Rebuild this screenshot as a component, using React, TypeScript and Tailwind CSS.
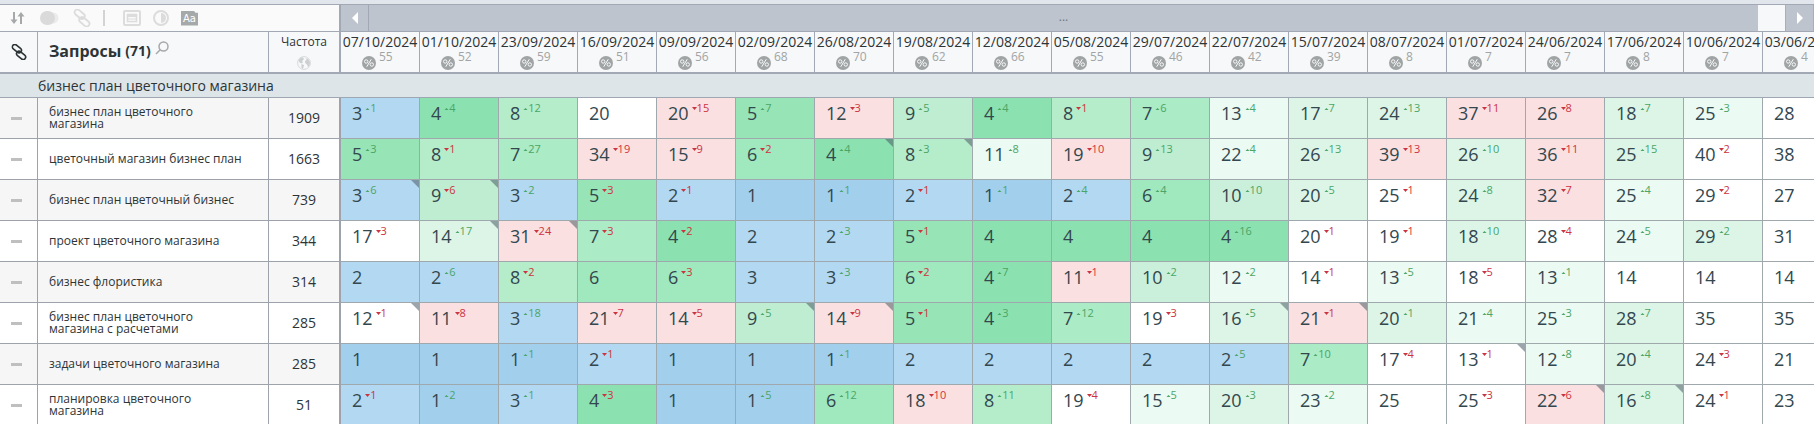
type Tone = 'w' | 'r' | 'b1' | 'b2' | 'g4' | 'g5' | 'g6' | 'g7' | 'g8' | 'g9' | 'g10' | 'p' | 'pp';

const TONES: Record<Tone, string> = {
  w: 'bg-white',
  r: 'bg-[#fae0e0]',
  b1: 'bg-[#a1cfec]',
  b2: 'bg-[#b3d8f1]',
  g4: 'bg-[#8be2b0]',
  g5: 'bg-[#97e4b6]',
  g6: 'bg-[#a0e8bd]',
  g7: 'bg-[#abebc5]',
  g8: 'bg-[#b5edcb]',
  g9: 'bg-[#beedd2]',
  g10: 'bg-[#caf0db]',
  p: 'bg-[#dcf5e7]',
  pp: 'bg-[#ebfaf2]',
};

const DATES: [string, number][] = [
  ['07/10/2024', 55],
  ['01/10/2024', 52],
  ['23/09/2024', 59],
  ['16/09/2024', 51],
  ['09/09/2024', 56],
  ['02/09/2024', 68],
  ['26/08/2024', 70],
  ['19/08/2024', 62],
  ['12/08/2024', 66],
  ['05/08/2024', 55],
  ['29/07/2024', 46],
  ['22/07/2024', 42],
  ['15/07/2024', 39],
  ['08/07/2024', 8],
  ['01/07/2024', 7],
  ['24/06/2024', 7],
  ['17/06/2024', 8],
  ['10/06/2024', 7],
  ['03/06/2024', 4],
];

// cell format: position, +gain or -loss, * marks a changed landing page, then the tone
const ROWS: { query: string; freq: number; cells: string }[] = [
  {
    query: 'бизнес план цветочного магазина',
    freq: 1909,
    cells:
      '3+1:b2 4+4:g4 8+12:g8 20:w 20-15:r 5+7:g5 12-3:r 9+5:g9 4+4:g4 8-1:g8 7+6:g7 13+4:pp 17+7:p 24+13:p 37-11:r 26-8:r 18+7:p 25+3:pp 28:w',
  },
  {
    query: 'цветочный магазин бизнес план',
    freq: 1663,
    cells:
      '5+3:g5 8-1:g8 7+27:g7 34-19:r 15-9:r 6-2:g6 4+4*:g4 8+3*:g8 11+8:pp 19-10:r 9+13:g9 22+4:pp 26+13:p 39-13:r 26+10:p 36-11:r 25+15:p 40-2:w 38:w',
  },
  {
    query: 'бизнес план цветочный бизнес',
    freq: 739,
    cells:
      '3+6*:b2 9-6*:g9 3+2:b2 5-3:g5 2-1:b2 1:b1 1+1:b1 2-1:b2 1+1:b1 2+4:b2 6+4:g6 10+10:g10 20+5:p 25-1:w 24+8:p 32-7:r 25+4:pp 29-2:w 27:w',
  },
  {
    query: 'проект цветочного магазина',
    freq: 344,
    cells:
      '17-3:w 14+17*:p 31-24*:r 7-3:g7 4-2:g4 2:b2 2+3:b2 5-1:g5 4:g4 4:g4 4:g4 4+16:g4 20-1:w 19-1:w 18+10:p 28-4:w 24+5:pp 29+2:p 31:w',
  },
  {
    query: 'бизнес флористика',
    freq: 314,
    cells:
      '2:b2 2+6:b2 8-2:g8 6:g6 6-3:g6 3:b2 3+3:b2 6-2:g6 4+7:g4 11-1:r 10+2:g10 12+2:pp 14-1:w 13+5:pp 18-5:w 13+1:pp 14:w 14:w 14:w',
  },
  {
    query: 'бизнес план цветочного магазина с расчетами',
    freq: 285,
    cells:
      '12-1*:w 11-8:r 3+18:b2 21-7:r 14-5:r 9+5*:g9 14-9*:r 5-1:g5 4+3:g4 7+12:g7 19-3:w 16+5*:p 21-1*:r 20+1:p 21+4:pp 25+3:pp 28+7:p 35:w 35:w',
  },
  {
    query: 'задачи цветочного магазина',
    freq: 285,
    cells:
      '1:b1 1:b1 1+1:b1 2-1:b2 1:b1 1:b1 1+1:b1 2:b2 2:b2 2:b2 2:b2 2+5:b2 7+10:g7 17-4:w 13-1*:w 12+8:pp 20+4:p 24-3:w 21:w',
  },
  {
    query: 'планировка цветочного магазина',
    freq: 51,
    cells:
      '2-1:b2 1+2:b1 3+1:b2 4-3:g4 1:b1 1+5:b1 6+12:g6 18-10:r 8+11:g8 19-4:w 15+5:pp 20+3:p 23+2:pp 25:w 25-3:w 22-6*:r 16+8*:p 24-1:w 23:w',
  },
];

function parseCell(raw: string) {
  const m = raw.match(/^(\d+)([+-])?(\d+)?(\*)?:(\w+)$/)!;
  return { pos: m[1], sign: m[2], diff: m[3], marked: Boolean(m[4]), tone: m[5] as Tone };
}

function ChainIcon({ className }: { className: string }) {
  return (
    <svg viewBox="0 0 18 18" className={className} fill="none" stroke="currentColor" strokeWidth="1.800" aria-hidden>
      <g transform="rotate(40 9 9)">
        <rect x="-1" y="4.800" width="11.500" height="5.600" rx="2.800" />
        <rect x="7.500" y="7.600" width="11.500" height="5.600" rx="2.800" />
      </g>
    </svg>
  );
}

function PercentIcon() {
  return (
    <svg viewBox="0 0 14 14" className="h-3.5 w-3.5" aria-hidden>
      <circle cx="7" cy="7" r="7" fill="#a0a4a5" />
      <g fill="none" stroke="#f7f8f9" strokeWidth="1">
        <circle cx="4.200" cy="5.500" r="1.700" />
        <circle cx="9.800" cy="8.500" r="1.700" />
        <path d="M9.300 3.200 4.700 10.800" />
      </g>
    </svg>
  );
}

function GlobeIcon() {
  return (
    <svg viewBox="0 0 14 14" className="h-3.5 w-3.5" aria-hidden>
      <circle cx="7" cy="7" r="6.400" fill="none" stroke="#d6d8da" strokeWidth="1" />
      <path d="M1.500 4 4 1.500l2.500.3.300 1.700L5 5l1 1.200L4.500 7.500 2.500 6.500zM4.500 8l2.500 1-.5 2.500L5.500 13l-1.200-2zM8.500 2.500l2.500.3L13 6l-.5 3.500L11 11l-1-2.500L8.200 7 8 5l1.500-1z" fill="#cdd0d2" />
    </svg>
  );
}

function Toolbar() {
  return (
    <div className="flex w-[341px] shrink-0 items-center border-r-2 border-[#a2a9b5] bg-[#fafafa] pl-2.5 text-[#dcdcdc]">
      <button type="button" aria-label="Сортировка" className="mr-[15px] text-[#a6a9a9]">
        <svg viewBox="0 0 15 14" className="h-3.5 w-[15px]" fill="none" stroke="currentColor" strokeWidth="2" aria-hidden>
          <path d="M4 1v9M11 13V4" />
          <path d="M.5 8.500h7L4 13zM7.500 5.500h7L11 1z" fill="currentColor" stroke="none" />
        </svg>
      </button>
      <button type="button" aria-label="Группы" className="mr-3.5">
        <svg viewBox="0 0 19 14" className="h-3.5 w-[19px]" aria-hidden>
          <circle cx="13" cy="7" r="5.500" fill="#ebebeb" />
          <rect x="0" y="0" width="15" height="14" rx="7" fill="#dadada" />
        </svg>
      </button>
      <button type="button" aria-label="Ссылки">
        <ChainIcon className="h-[18px] w-[18px]" />
      </button>
      <span className="ml-3 mr-[18px] h-4 w-0.5 bg-[#d3d3d3]" />
      <button type="button" aria-label="Таблица" className="mr-3">
        <svg viewBox="0 0 18 16" className="h-4 w-[18px]" fill="none" stroke="currentColor" strokeWidth="2" aria-hidden>
          <rect x="1" y="1" width="16" height="14" rx="1" />
          <rect x="4.500" y="4.500" width="9" height="7" strokeWidth="1.500" />
          <path d="M4 5.500h10" strokeWidth="3" />
          <path d="M5 9h8" strokeWidth="1" />
        </svg>
      </button>
      <button type="button" aria-label="Контраст" className="mr-3">
        <svg viewBox="0 0 16 16" className="h-4 w-4" aria-hidden>
          <circle cx="8" cy="8" r="7" fill="none" stroke="currentColor" strokeWidth="2" />
          <path d="M8 3a5 5 0 0 1 0 10z" fill="currentColor" />
        </svg>
      </button>
      <button
        type="button"
        aria-label="Шрифт"
        className="h-[15px] w-[17px] bg-[#a6a9a9] text-center font-['DejaVu_Sans',sans-serif] text-[10px] leading-4 text-white [clip-path:polygon(0_0,75%_0,85%_15%,100%_15%,100%_100%,0_100%)]"
      >
        Aa
      </button>
    </div>
  );
}

function DateScroller() {
  return (
    <div className="flex min-w-0 flex-1 bg-[#bdc4cd]">
      <button type="button" aria-label="Назад" className="flex w-7 items-center justify-center border-r border-[#a2a9b5]">
        <svg viewBox="0 0 6 12" className="h-3 w-1.5" fill="#fff" aria-hidden>
          <path d="M6 0v12L0 6z" />
        </svg>
      </button>
      <div className="flex flex-1 justify-center pt-1 text-[12px] leading-4 text-[#6c7480]">...</div>
      <div className="w-[27px] bg-[#f7f8f9]" />
      <button type="button" aria-label="Вперёд" className="flex w-[29px] items-center justify-center border-x border-[#a2b0c0]">
        <svg viewBox="0 0 6 12" className="h-3 w-1.5" fill="#fff" aria-hidden>
          <path d="M0 0v12l6-6z" />
        </svg>
      </button>
    </div>
  );
}

function PositionCell({ raw }: { raw: string }) {
  const { pos, sign, diff, marked, tone } = parseCell(raw);
  return (
    <td className={`relative h-[41px] border-r border-b border-[#9ea8ad] p-0 align-top ${TONES[tone]}`}>
      <div className="flex items-start gap-[3px] pt-[3px] pl-[11px]">
        <span className="text-[18px] leading-6 text-[#33474f]">{pos}</span>
        {diff && (
          <span className={`flex items-center pt-px text-[11px] leading-3 ${sign === '+' ? 'text-[#4aa566]' : 'text-[#cc3340]'}`}>
            <svg viewBox="0 0 5 3" className="h-[3px] w-[5px]" fill="currentColor" aria-hidden>
              <path d={sign === '+' ? 'M.5 3h4l-2-2z' : 'M0 0h5L2.500 3z'} />
            </svg>
            {diff}
          </span>
        )}
      </div>
      {marked && (
        <svg viewBox="0 0 8 8" className="absolute top-0 right-0 h-2 w-2" fill="#4b5b66" fillOpacity="0.55" aria-hidden>
          <path d="M0 0h8v8z" />
        </svg>
      )}
    </td>
  );
}

export default function App() {
  return (
    <div className="h-screen overflow-hidden bg-white font-['Open_Sans','Noto_Sans',sans-serif] text-[#2d3436]">
      <div className="h-1 bg-[#e1e6ec]" />
      <div className="flex h-7 border-y border-[#a2a9b5]">
        <Toolbar />
        <DateScroller />
      </div>

      <div className="overflow-hidden">
        <table className="w-[1842px] table-fixed border-separate border-spacing-0">
          <colgroup>
            <col className="w-[38px]" />
            <col className="w-[231px]" />
            <col className="w-[72px]" />
            {DATES.map(([date]) => (
              <col key={date} className="w-[79px]" />
            ))}
          </colgroup>
          <thead>
            <tr className="h-[42px] bg-[#f7f8f9]">
              <th className="border-r border-b-2 border-[#a2a9b5] p-0">
                <ChainIcon className="mx-auto h-4 w-4" />
              </th>
              <th className="border-r border-b-2 border-[#a2a9b5] p-0 pb-0.5 pl-[11px] text-left">
                <div className="flex items-center">
                  <span className="text-[16px] leading-6 font-bold">Запросы</span>
                  <span className="ml-1 text-[14px] leading-6 font-bold">(71)</span>
                  <svg viewBox="0 0 14 14" className="mb-1.5 ml-1 h-3.5 w-3.5" fill="none" stroke="#a6a9a9" strokeWidth="1.500" aria-hidden>
                    <circle cx="8.500" cy="5.500" r="4.500" />
                    <path d="M5.200 8.800 1 13" />
                  </svg>
                </div>
              </th>
              <th className="border-r-2 border-b-2 border-[#a2a9b5] p-0 align-top font-normal">
                <div className="flex flex-col items-center gap-1.5 pt-0.5">
                  <span className="text-[12px] leading-4">Частота</span>
                  <GlobeIcon />
                </div>
              </th>
              {DATES.map(([date, percent]) => (
                <th key={date} className="overflow-hidden border-r border-b-2 border-[#a2a9b5] p-0 align-top font-normal">
                  <div className="text-center text-[14px] leading-5 whitespace-nowrap">{date}</div>
                  <div className="flex items-start gap-[3px] pl-[21px]">
                    <span className="pt-1">
                      <PercentIcon />
                    </span>
                    <span className="text-[12px] leading-[10px] text-[#a0a4a5]">{percent}</span>
                  </div>
                </th>
              ))}
            </tr>
          </thead>
          <tbody>
            <tr className="h-6 bg-[#dde5e9]">
              <td colSpan={22} className="border-b border-[#9ea8b3] p-0 pl-[38px] text-[14px] leading-5">
                бизнес план цветочного магазина
              </td>
            </tr>
            {ROWS.map(({ query, freq, cells }) => (
              <tr key={query} className="h-[41px] odd:bg-white even:bg-[#f6f6f7]">
                <td className="border-r border-b border-[#9ea3ab] p-0">
                  <div className="ml-[11px] h-[3px] w-[11px] bg-[#bfbfbf]" />
                </td>
                <td className="border-r border-b border-[#9ea3ab] p-0 pr-5 pl-[11px] text-[12px] leading-3">
                  {query}
                </td>
                <td className="border-r-2 border-b border-[#9ea3ab] p-0 text-center text-[14px] leading-5">{freq}</td>
                {cells.split(' ').map((raw, i) => (
                  <PositionCell key={i} raw={raw} />
                ))}
              </tr>
            ))}
          </tbody>
        </table>
      </div>
    </div>
  );
}
